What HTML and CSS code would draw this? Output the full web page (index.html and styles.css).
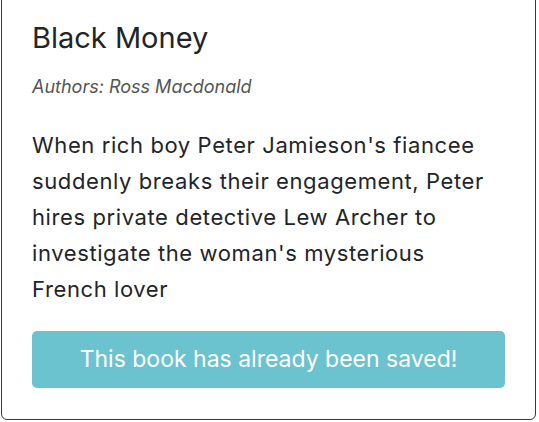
FILE: index.html
```html
<!DOCTYPE html>
<html>
<head>
<meta charset="utf-8">
<link rel="stylesheet" href="styles.css">
</head>
<body>
<div class="card">
  <h2 class="title">Black Money</h2>
  <p class="authors">Authors: Ross Macdonald</p>
  <p class="desc">When rich boy Peter Jamieson's fiancee suddenly breaks their engagement, Peter hires private detective Lew Archer to investigate the woman's mysterious French lover</p>
  <button class="saved" disabled>This book has already been saved!</button>
</div>
</body>
</html>
```
FILE: styles.css
```css
html, body {
  margin: 0;
  padding: 0;
  background: #fff;
}
body {
  font-family: Inter, "Noto Sans", sans-serif;
  color: #212529;
}
.card {
  box-sizing: border-box;
  width: 535px;
  margin: -20px 0 0 1px;
  padding: 40px 30px 31px;
  border: 1px solid #3a3a3a;
  border-radius: 6px;
  display: flex;
  flex-direction: column;
}
.title {
  margin: 0;
  font-size: 29px;
  font-weight: 400;
  line-height: 1.2;
}
.authors {
  margin: 20px 0 0;
  font-size: 18px;
  font-style: italic;
  color: #555;
}
.desc {
  margin: 30px 0 0;
  padding-right: 12px;
  font-size: 22px;
  letter-spacing: 0.6px;
  line-height: 36px;
}
.saved {
  margin-top: 24px;
  height: 57px;
  border: none;
  border-radius: 5px;
  background: #6cc3d0;
  color: #fff;
  font-family: Inter, sans-serif;
  font-size: 23px;
}
```
